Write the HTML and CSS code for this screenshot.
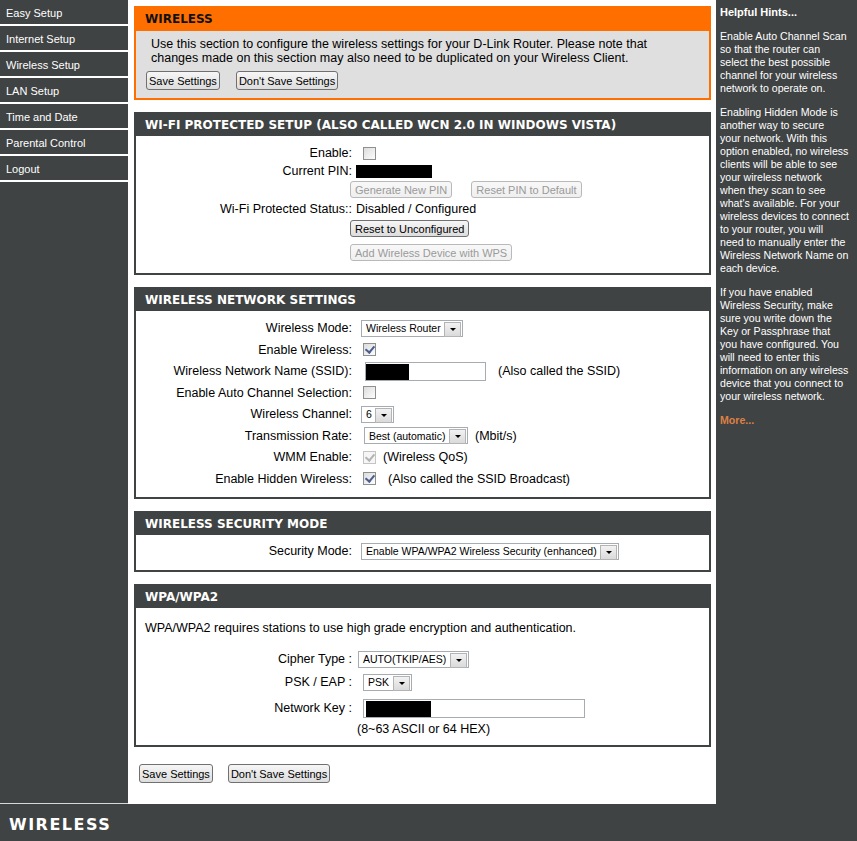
FILE: index.html
```html
<!DOCTYPE html>
<html lang="en">
<head>
  <meta charset="UTF-8">
  <title>D-Link Wireless Setup</title>
  <link rel="stylesheet" href="styles.css">
</head>
<body>
  <div class="layout">
    <!-- Left menu -->
    <nav class="sidenav">
      <ul>
        <li><a href="#">Easy Setup</a></li>
        <li><a href="#">Internet Setup</a></li>
        <li><a href="#" class="active">Wireless Setup</a></li>
        <li><a href="#">LAN Setup</a></li>
        <li><a href="#">Time and Date</a></li>
        <li><a href="#">Parental Control</a></li>
        <li><a href="#">Logout</a></li>
      </ul>
    </nav>

    <main class="content">
      <!-- Intro -->
      <div class="box box-intro">
        <h2 class="box-title">WIRELESS</h2>
        <div class="box-body">
          <p class="intro-text">Use this section to configure the wireless settings for your D-Link Router. Please note that changes made on this section may also need to be duplicated on your Wireless Client.</p>
          <div class="actions">
            <button class="btn">Save Settings</button>
            <button class="btn">Don't Save Settings</button>
          </div>
        </div>
      </div>

      <!-- WPS -->
      <div class="box box-wps">
        <h2 class="box-title">WI-FI PROTECTED SETUP (ALSO CALLED WCN 2.0 IN WINDOWS VISTA)</h2>
        <div class="box-body">
          <div class="row row-18">
            <label class="field-label">Enable:</label>
            <div class="field"><input type="checkbox" class="check"></div>
          </div>
          <div class="row row-18">
            <label class="field-label">Current PIN:</label>
            <div class="field"><span class="redacted pin"></span></div>
          </div>
          <div class="row row-19">
            <span class="field-label"></span>
            <div class="field">
              <button class="btn btn-small wps-btn" disabled>Generate New PIN</button>
              <button class="btn btn-small btn-gap" disabled>Reset PIN to Default</button>
            </div>
          </div>
          <div class="row row-20">
            <label class="field-label">Wi-Fi Protected Status::</label>
            <div class="field">Disabled / Configured</div>
          </div>
          <div class="row row-19">
            <span class="field-label"></span>
            <div class="field"><button class="btn btn-small wps-btn">Reset to Unconfigured</button></div>
          </div>
          <div class="row row-19 row-spaced">
            <span class="field-label"></span>
            <div class="field"><button class="btn btn-small wps-btn" disabled>Add Wireless Device with WPS</button></div>
          </div>
        </div>
      </div>

      <!-- Wireless network settings -->
      <div class="box box-network">
        <h2 class="box-title">WIRELESS NETWORK SETTINGS</h2>
        <div class="box-body">
          <div class="row">
            <label class="field-label">Wireless Mode:</label>
            <div class="field">
              <span class="select-wrap"><select class="select"><option>Wireless Router</option></select></span>
            </div>
          </div>
          <div class="row">
            <label class="field-label">Enable Wireless:</label>
            <div class="field"><input type="checkbox" class="check" checked></div>
          </div>
          <div class="row">
            <label class="field-label">Wireless Network Name (SSID):</label>
            <div class="field">
              <span class="input-wrap ssid"><input type="text" class="text-input"><span class="redacted"></span></span>
              <span class="note note-wide">(Also called the SSID)</span>
            </div>
          </div>
          <div class="row">
            <label class="field-label">Enable Auto Channel Selection:</label>
            <div class="field"><input type="checkbox" class="check"></div>
          </div>
          <div class="row">
            <label class="field-label">Wireless Channel:</label>
            <div class="field">
              <span class="select-wrap"><select class="select"><option>6</option></select></span>
            </div>
          </div>
          <div class="row">
            <label class="field-label">Transmission Rate:</label>
            <div class="field">
              <span class="select-wrap select-rate"><select class="select"><option>Best (automatic)</option></select></span>
              <span class="note">(Mbit/s)</span>
            </div>
          </div>
          <div class="row">
            <label class="field-label">WMM Enable:</label>
            <div class="field">
              <input type="checkbox" class="check" checked disabled>
              <span class="note">(Wireless QoS)</span>
            </div>
          </div>
          <div class="row">
            <label class="field-label">Enable Hidden Wireless:</label>
            <div class="field">
              <input type="checkbox" class="check" checked>
              <span class="note note-wide">(Also called the SSID Broadcast)</span>
            </div>
          </div>
        </div>
      </div>

      <!-- Security mode -->
      <div class="box box-security">
        <h2 class="box-title">WIRELESS SECURITY MODE</h2>
        <div class="box-body">
          <div class="row row-20">
            <label class="field-label">Security Mode:</label>
            <div class="field">
              <span class="select-wrap"><select class="select"><option>Enable WPA/WPA2 Wireless Security (enhanced)</option></select></span>
            </div>
          </div>
        </div>
      </div>

      <!-- WPA -->
      <div class="box box-wpa">
        <h2 class="box-title">WPA/WPA2</h2>
        <div class="box-body">
          <p class="wpa-text">WPA/WPA2 requires stations to use high grade encryption and authentication.</p>
          <div class="row row-20">
            <label class="field-label">Cipher Type :</label>
            <div class="field">
              <span class="select-wrap select-cipher"><select class="select"><option>AUTO(TKIP/AES)</option></select></span>
            </div>
          </div>
          <div class="row row-20 row-psk">
            <label class="field-label">PSK / EAP :</label>
            <div class="field">
              <span class="select-wrap select-psk"><select class="select"><option>PSK</option></select></span>
            </div>
          </div>
          <div class="row row-20 row-key">
            <label class="field-label">Network Key :</label>
            <div class="field">
              <span class="input-wrap netkey"><input type="text" class="text-input"><span class="redacted"></span></span>
            </div>
          </div>
          <div class="row row-14">
            <span class="field-label"></span>
            <div class="field key-hint">(8~63 ASCII or 64 HEX)</div>
          </div>
        </div>
      </div>

      <div class="actions bottom-actions">
        <button class="btn">Save Settings</button>
        <button class="btn">Don't Save Settings</button>
      </div>
    </main>

    <!-- Hints -->
    <aside class="hints">
      <h3>Helpful Hints...</h3>
      <p>Enable Auto Channel Scan<br>so that the router can<br>select the best possible<br>channel for your wireless<br>network to operate on.</p>
      <p>Enabling Hidden Mode is<br>another way to secure<br>your network. With this<br>option enabled, no wireless<br>clients will be able to see<br>your wireless network<br>when they scan to see<br>what's available. For your<br>wireless devices to connect<br>to your router, you will<br>need to manually enter the<br>Wireless Network Name on<br>each device.</p>
      <p>If you have enabled<br>Wireless Security, make<br>sure you write down the<br>Key or Passphrase that<br>you have configured. You<br>will need to enter this<br>information on any wireless<br>device that you connect to<br>your wireless network.</p>
      <p><a href="#" class="more">More...</a></p>
    </aside>
  </div>

  <footer class="footer">
    <span class="footer-logo">WIRELESS</span>
  </footer>
</body>
</html>
```

FILE: styles.css
```css
/* Base */
* {
  margin: 0;
  padding: 0;
  box-sizing: border-box;
}
:root {
  --dark: #404343;
  --orange: #ff6f00;
  --gray-box: #dfdfdf;
  --field-border: #a5acb2;
  --text: #000;
}
body {
  background: var(--dark);
  font-family: "Liberation Sans", Arial, sans-serif;
  font-size: 12.5px;
  color: var(--text);
}

/* Page columns */
.layout {
  display: grid;
  grid-template-columns: 128px 588px 141px;
}

/* Left menu */
.sidenav {
  border-bottom: 1px solid #d8d8d8;
}
.sidenav ul {
  list-style: none;
}
.sidenav li {
  border-bottom: 2px solid #fff;
}
.sidenav a {
  display: block;
  height: 24px;
  line-height: 26px;
  padding-left: 6px;
  color: #fff;
  font-size: 11px;
  text-decoration: none;
}

/* Main content */
.content {
  background: #fff;
  padding: 6px 5px 21px 6px;
}
.box {
  border: 2px solid var(--dark);
  margin-bottom: 12px;
}
.box-title {
  background: var(--dark);
  color: #fff;
  font-family: "DejaVu Sans", Verdana, sans-serif;
  font-size: 12px;
  font-weight: bold;
  height: 22px;
  line-height: 22px;
  padding-left: 9px;
}

/* Orange intro box */
.box-intro {
  border-color: var(--orange);
  background: var(--gray-box);
}
.box-intro .box-title {
  background: var(--orange);
  color: #111;
  height: 23px;
  line-height: 23px;
}
.box-intro .box-body {
  padding: 6px 0 8px 10px;
}
.intro-text {
  width: 520px;
  padding-left: 5px;
  line-height: 14px;
}
.actions {
  margin-top: 6px;
  display: flex;
  gap: 16px;
}
.bottom-actions {
  margin-top: 17px;
  margin-left: 5px;
  gap: 15px;
}

/* Form rows */
.row {
  display: flex;
  align-items: center;
  height: 21.5px;
}
.row-14 { height: 14px; }
.row-18 { height: 18px; }
.row-19 { height: 19px; }
.row-20 { height: 20px; }
.field-label {
  width: 216px;
  flex: none;
  text-align: right;
}
.field {
  display: flex;
  align-items: center;
  padding-left: 4px;
  white-space: nowrap;
}
.note {
  margin-left: 7px;
}
.note-wide {
  margin-left: 12px;
}

.box-wps .box-body {
  padding: 8px 0 11px;
}
.row-spaced {
  margin-top: 5px;
}
.box-network .box-body {
  padding: 6.5px 0 7.5px;
}
.box-security .box-body {
  padding: 6px 0 9px;
}
.box-wpa .box-body {
  padding: 13px 0 9px;
}
.wpa-text {
  padding-left: 9px;
  line-height: 14px;
  margin-bottom: 14px;
}
.row-psk {
  margin-top: 3px;
}
.row-key {
  margin-top: 6px;
  margin-bottom: 4px;
}
.key-hint {
  padding-left: 5px;
}

/* Buttons */
.btn {
  font-family: "Liberation Sans", Arial, sans-serif;
  font-size: 11px;
  height: 19px;
  padding: 0 2px;
  color: #000;
  border: 1px solid #707070;
  border-radius: 3px;
  background: linear-gradient(#f6f6f6, #dddddd);
  cursor: pointer;
}
.btn-small {
  height: 17px;
  padding: 0 4px;
}
.btn:disabled {
  color: #9a9a9a;
  border-color: #b9b9b9;
  background: linear-gradient(#f8f8f8, #efefef);
  cursor: default;
}
.wps-btn {
  margin-left: -6px;
}
.btn-gap {
  margin-left: 19px;
}

/* Checkboxes */
.check {
  appearance: none;
  width: 13px;
  height: 13px;
  margin-left: 7px;
  border: 1px solid #8e8f8f;
  background: linear-gradient(135deg, #dcdcdc, #fdfdfd);
  position: relative;
}
.check:checked::after {
  content: "";
  position: absolute;
  left: 3px;
  top: 0;
  width: 4px;
  height: 7px;
  border: solid #4a5f8e;
  border-width: 0 2px 2px 0;
  transform: rotate(40deg);
}
.check:disabled {
  border-color: #c4c4c4;
  background: #f6f6f6;
}
.check:disabled::after {
  border-color: #b4b4b4;
}

/* Drop-downs */
.select-wrap {
  position: relative;
  display: inline-block;
  margin-left: 5px;
  height: 17px;
}
.select {
  appearance: none;
  height: 17px;
  border: 1px solid var(--field-border);
  background: #fff;
  font-family: "Liberation Sans", Arial, sans-serif;
  font-size: 10.5px;
  padding: 0 21px 0 4px;
  color: #000;
  border-radius: 0;
}
.select-wrap::after {
  content: "";
  position: absolute;
  right: 2px;
  top: 2px;
  width: 15px;
  height: 13px;
  background: linear-gradient(#f2f2f2, #dadada);
  border: 1px solid #b4b4b4;
}
.select-wrap::before {
  content: "";
  position: absolute;
  right: 7px;
  top: 8px;
  border-left: 3px solid transparent;
  border-right: 3px solid transparent;
  border-top: 3px solid #000;
  z-index: 1;
}
.select-rate {
  margin-left: 8px;
}
.select-cipher {
  margin-left: 2px;
}
.select-psk {
  margin-left: 7px;
}

/* Text inputs with blacked-out value */
.input-wrap {
  position: relative;
  display: inline-block;
  height: 19px;
  margin-left: 9px;
}
.text-input {
  height: 19px;
  border: 1px solid var(--field-border);
  background: #fff;
}
.ssid .text-input {
  width: 121px;
}
.netkey {
  margin-left: 7px;
}
.netkey .text-input {
  width: 222px;
}
.redacted {
  display: inline-block;
  background: #000;
}
.input-wrap .redacted {
  position: absolute;
  left: 1px;
  top: 2px;
  height: 16px;
  width: 43px;
}
.netkey .redacted {
  left: 3px;
  width: 65px;
}
.pin {
  width: 76px;
  height: 13px;
}

/* Hints column */
.hints {
  padding: 6px 2px 0 4px;
  color: #fff;
  font-size: 10.6px;
  line-height: 13px;
}
.hints h3 {
  font-size: 11px;
  font-weight: bold;
  margin-bottom: 11px;
}
.hints p {
  margin-bottom: 11px;
  white-space: nowrap;
}
.more {
  color: #dd8045;
  font-weight: bold;
  text-decoration: none;
}

/* Footer */
.footer {
  height: 38px;
  padding: 3px 0 0 9px;
  display: flex;
  align-items: center;
}
.footer-logo {
  color: #fff;
  font-family: "DejaVu Sans", Verdana, sans-serif;
  font-size: 16px;
  font-weight: bold;
  letter-spacing: 1.5px;
}
```
